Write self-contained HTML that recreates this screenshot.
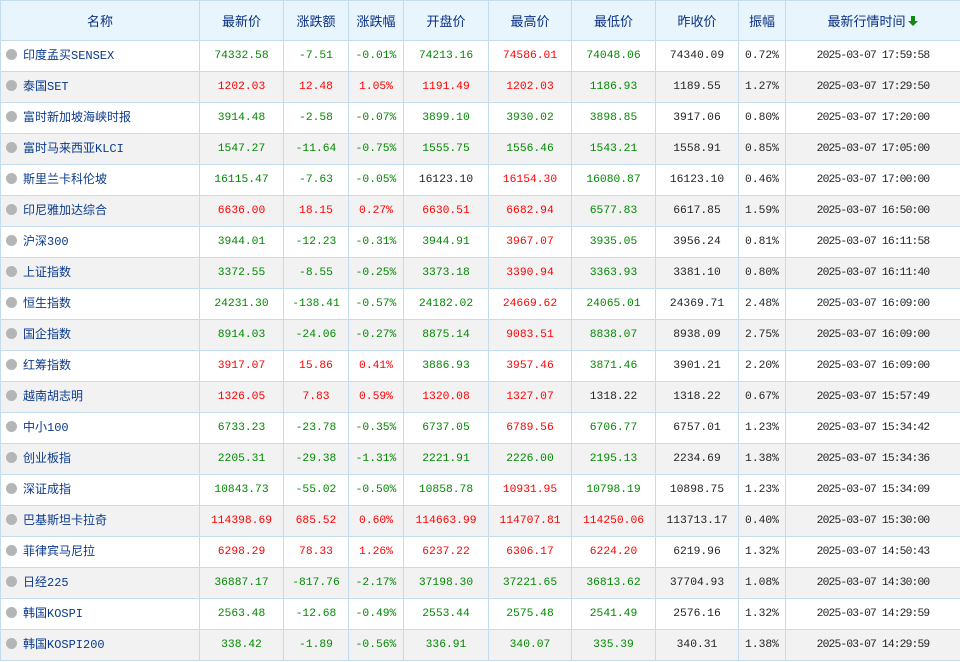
<!DOCTYPE html>
<html><head><meta charset="utf-8">
<style>
body{margin:0;width:960px;height:662px;overflow:hidden;background:#fff;font-family:"Liberation Mono","Noto Sans CJK SC",monospace;font-size:11.3px;}
table{border-collapse:collapse;table-layout:fixed;width:960px;}
td,th{border:1px solid #c4dcef;text-align:center;padding:0;white-space:nowrap;overflow:hidden;}
th{height:39px;background:#e9f5fd;color:#0a2f80;font-weight:normal;font-family:"Liberation Sans","Noto Sans CJK SC",sans-serif;font-size:13px;}
td{height:30px;}
tr:nth-child(odd) td{background:#f2f2f2;}
td.n{text-align:left;color:#0b3a8c;font-size:12px;line-height:29px;}
td:last-child{letter-spacing:-0.85px;}
.dot{display:inline-block;width:11px;height:11px;border-radius:50%;background:#b5b5b5;margin:0 6px 0 5px;vertical-align:-1px;}
.g{color:#008800}.r{color:#f00}.k{color:#222}
</style></head><body>
<table>
<colgroup><col style="width:199px"><col style="width:84px"><col style="width:65px"><col style="width:55px"><col style="width:85px"><col style="width:83px"><col style="width:84px"><col style="width:83px"><col style="width:47px"><col style="width:175px"></colgroup>
<tr><th>名称</th><th>最新价</th><th>涨跌额</th><th>涨跌幅</th><th>开盘价</th><th>最高价</th><th>最低价</th><th>昨收价</th><th>振幅</th><th style="letter-spacing:0">最新行情时间<svg width="12" height="12" viewBox="0 0 12 12" style="vertical-align:-1px;margin-left:1px"><path d="M4 1h4v5h3L6 11 1 6h3z" fill="#118a11"/></svg></th></tr>
<tr><td class="n"><span class="dot"></span>印度孟买SENSEX</td><td class="g">74332.58</td><td class="g">-7.51</td><td class="g">-0.01%</td><td class="g">74213.16</td><td class="r">74586.01</td><td class="g">74048.06</td><td class="k">74340.09</td><td class="k">0.72%</td><td class="k">2025-03-07 17:59:58</td></tr>
<tr><td class="n"><span class="dot"></span>泰国SET</td><td class="r">1202.03</td><td class="r">12.48</td><td class="r">1.05%</td><td class="r">1191.49</td><td class="r">1202.03</td><td class="g">1186.93</td><td class="k">1189.55</td><td class="k">1.27%</td><td class="k">2025-03-07 17:29:50</td></tr>
<tr><td class="n"><span class="dot"></span>富时新加坡海峡时报</td><td class="g">3914.48</td><td class="g">-2.58</td><td class="g">-0.07%</td><td class="g">3899.10</td><td class="g">3930.02</td><td class="g">3898.85</td><td class="k">3917.06</td><td class="k">0.80%</td><td class="k">2025-03-07 17:20:00</td></tr>
<tr><td class="n"><span class="dot"></span>富时马来西亚KLCI</td><td class="g">1547.27</td><td class="g">-11.64</td><td class="g">-0.75%</td><td class="g">1555.75</td><td class="g">1556.46</td><td class="g">1543.21</td><td class="k">1558.91</td><td class="k">0.85%</td><td class="k">2025-03-07 17:05:00</td></tr>
<tr><td class="n"><span class="dot"></span>斯里兰卡科伦坡</td><td class="g">16115.47</td><td class="g">-7.63</td><td class="g">-0.05%</td><td class="k">16123.10</td><td class="r">16154.30</td><td class="g">16080.87</td><td class="k">16123.10</td><td class="k">0.46%</td><td class="k">2025-03-07 17:00:00</td></tr>
<tr><td class="n"><span class="dot"></span>印尼雅加达综合</td><td class="r">6636.00</td><td class="r">18.15</td><td class="r">0.27%</td><td class="r">6630.51</td><td class="r">6682.94</td><td class="g">6577.83</td><td class="k">6617.85</td><td class="k">1.59%</td><td class="k">2025-03-07 16:50:00</td></tr>
<tr><td class="n"><span class="dot"></span>沪深300</td><td class="g">3944.01</td><td class="g">-12.23</td><td class="g">-0.31%</td><td class="g">3944.91</td><td class="r">3967.07</td><td class="g">3935.05</td><td class="k">3956.24</td><td class="k">0.81%</td><td class="k">2025-03-07 16:11:58</td></tr>
<tr><td class="n"><span class="dot"></span>上证指数</td><td class="g">3372.55</td><td class="g">-8.55</td><td class="g">-0.25%</td><td class="g">3373.18</td><td class="r">3390.94</td><td class="g">3363.93</td><td class="k">3381.10</td><td class="k">0.80%</td><td class="k">2025-03-07 16:11:40</td></tr>
<tr><td class="n"><span class="dot"></span>恒生指数</td><td class="g">24231.30</td><td class="g">-138.41</td><td class="g">-0.57%</td><td class="g">24182.02</td><td class="r">24669.62</td><td class="g">24065.01</td><td class="k">24369.71</td><td class="k">2.48%</td><td class="k">2025-03-07 16:09:00</td></tr>
<tr><td class="n"><span class="dot"></span>国企指数</td><td class="g">8914.03</td><td class="g">-24.06</td><td class="g">-0.27%</td><td class="g">8875.14</td><td class="r">9083.51</td><td class="g">8838.07</td><td class="k">8938.09</td><td class="k">2.75%</td><td class="k">2025-03-07 16:09:00</td></tr>
<tr><td class="n"><span class="dot"></span>红筹指数</td><td class="r">3917.07</td><td class="r">15.86</td><td class="r">0.41%</td><td class="g">3886.93</td><td class="r">3957.46</td><td class="g">3871.46</td><td class="k">3901.21</td><td class="k">2.20%</td><td class="k">2025-03-07 16:09:00</td></tr>
<tr><td class="n"><span class="dot"></span>越南胡志明</td><td class="r">1326.05</td><td class="r">7.83</td><td class="r">0.59%</td><td class="r">1320.08</td><td class="r">1327.07</td><td class="k">1318.22</td><td class="k">1318.22</td><td class="k">0.67%</td><td class="k">2025-03-07 15:57:49</td></tr>
<tr><td class="n"><span class="dot"></span>中小100</td><td class="g">6733.23</td><td class="g">-23.78</td><td class="g">-0.35%</td><td class="g">6737.05</td><td class="r">6789.56</td><td class="g">6706.77</td><td class="k">6757.01</td><td class="k">1.23%</td><td class="k">2025-03-07 15:34:42</td></tr>
<tr><td class="n"><span class="dot"></span>创业板指</td><td class="g">2205.31</td><td class="g">-29.38</td><td class="g">-1.31%</td><td class="g">2221.91</td><td class="g">2226.00</td><td class="g">2195.13</td><td class="k">2234.69</td><td class="k">1.38%</td><td class="k">2025-03-07 15:34:36</td></tr>
<tr><td class="n"><span class="dot"></span>深证成指</td><td class="g">10843.73</td><td class="g">-55.02</td><td class="g">-0.50%</td><td class="g">10858.78</td><td class="r">10931.95</td><td class="g">10798.19</td><td class="k">10898.75</td><td class="k">1.23%</td><td class="k">2025-03-07 15:34:09</td></tr>
<tr><td class="n"><span class="dot"></span>巴基斯坦卡拉奇</td><td class="r">114398.69</td><td class="r">685.52</td><td class="r">0.60%</td><td class="r">114663.99</td><td class="r">114707.81</td><td class="r">114250.06</td><td class="k">113713.17</td><td class="k">0.40%</td><td class="k">2025-03-07 15:30:00</td></tr>
<tr><td class="n"><span class="dot"></span>菲律宾马尼拉</td><td class="r">6298.29</td><td class="r">78.33</td><td class="r">1.26%</td><td class="r">6237.22</td><td class="r">6306.17</td><td class="r">6224.20</td><td class="k">6219.96</td><td class="k">1.32%</td><td class="k">2025-03-07 14:50:43</td></tr>
<tr><td class="n"><span class="dot"></span>日经225</td><td class="g">36887.17</td><td class="g">-817.76</td><td class="g">-2.17%</td><td class="g">37198.30</td><td class="g">37221.65</td><td class="g">36813.62</td><td class="k">37704.93</td><td class="k">1.08%</td><td class="k">2025-03-07 14:30:00</td></tr>
<tr><td class="n"><span class="dot"></span>韩国KOSPI</td><td class="g">2563.48</td><td class="g">-12.68</td><td class="g">-0.49%</td><td class="g">2553.44</td><td class="g">2575.48</td><td class="g">2541.49</td><td class="k">2576.16</td><td class="k">1.32%</td><td class="k">2025-03-07 14:29:59</td></tr>
<tr><td class="n"><span class="dot"></span>韩国KOSPI200</td><td class="g">338.42</td><td class="g">-1.89</td><td class="g">-0.56%</td><td class="g">336.91</td><td class="g">340.07</td><td class="g">335.39</td><td class="k">340.31</td><td class="k">1.38%</td><td class="k">2025-03-07 14:29:59</td></tr>
</table>
</body></html>
